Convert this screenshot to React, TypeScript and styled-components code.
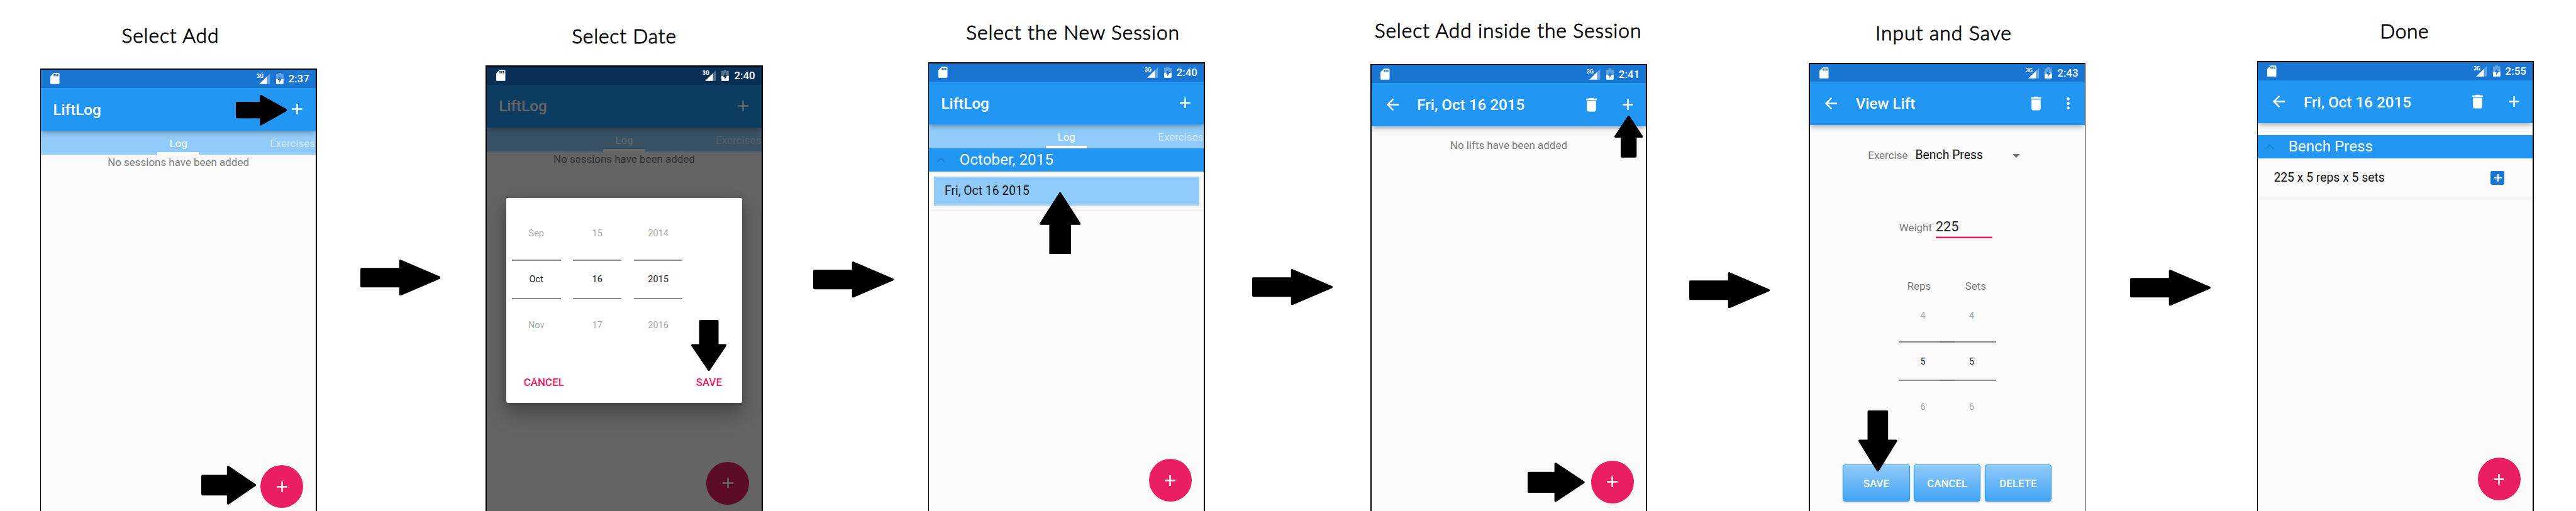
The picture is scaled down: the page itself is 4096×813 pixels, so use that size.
import React from "react";
import styled, { createGlobalStyle, css } from "styled-components";

const GlobalStyle = createGlobalStyle`
  html, body { margin: 0; padding: 0; background: #fff; overflow: hidden; }
  *, *::before, *::after { box-sizing: border-box; }
`;

const color = {
  primary: "#2196f3",
  primaryDark: "#1976d2",
  primaryLight: "#90caf9",
  accent: "#e91e63",
  surface: "#fafafa",
  secondaryText: "#7c7c7c",
};

/* ---------- board ---------- */

const Board = styled.main`
  zoom: 0.9074;
  width: 4514px;
  height: 896px;
  display: flex;
  align-items: stretch;
  overflow: hidden;
  background: #fff;
  font-family: Roboto, "Liberation Sans", sans-serif;
`;

const StepColumn = styled.section<{ $gap: number }>`
  flex: none;
  width: 485px;
  margin-left: ${(p) => p.$gap}px;
  display: flex;
  flex-direction: column;
`;

const StepHeading = styled.h2<{ $height: number; $top: number; $shift: number; $track: number }>`
  flex: none;
  margin: 0 -40px;
  height: ${(p) => p.$height}px;
  padding-top: ${(p) => p.$top}px;
  padding-left: ${(p) => Math.max(0, p.$shift * 2)}px;
  padding-right: ${(p) => Math.max(0, -p.$shift * 2)}px;
  font: 300 35px/42px Lato, "Liberation Sans", sans-serif;
  -webkit-text-stroke: 1px #000;
  letter-spacing: ${(p) => p.$track}px;
  text-align: center;
  white-space: nowrap;
  color: #000;
`;

const Frame = styled.div`
  flex: 1;
  min-height: 0;
  padding: 2px 2px 0;
  background: #000;
`;

const Screen = styled.div`
  position: relative;
  height: 100%;
  overflow: hidden;
  background: ${color.surface};
`;

const Connector = styled.div<{ $gap: number; $top: number }>`
  flex: none;
  width: 141px;
  margin-left: ${(p) => p.$gap}px;
  padding-top: ${(p) => p.$top}px;
  line-height: 0;
`;

/* ---------- block arrows ---------- */

type Direction = "right" | "up" | "down";

const ArrowSvg = styled.svg`
  display: block;
`;

const Pointer = styled.div<{ $x: number; $y: number }>`
  position: absolute;
  left: ${(p) => p.$x}px;
  top: ${(p) => p.$y}px;
  z-index: 5;
`;

function Arrow({ dir, length, span, head, shaft }: {
  dir: Direction; length: number; span: number; head: number; shaft: number;
}) {
  const r = 2;
  const neck = length - head + r;
  const a = (span - shaft) / 2 + r;
  const b = (span + shaft) / 2 - r;
  const base: [number, number][] = [
    [r, a], [neck, a], [neck, r], [length - r, span / 2], [neck, span - r], [neck, b], [r, b],
  ];
  const points = base.map(([x, y]) =>
    dir === "right" ? [x, y] : dir === "down" ? [y, x] : [y, length - x]
  );
  const w = dir === "right" ? length : span;
  const h = dir === "right" ? span : length;
  return (
    <ArrowSvg width={w} height={h} viewBox={`0 0 ${w} ${h}`}>
      <polygon points={points.map((p) => p.join(",")).join(" ")} fill="#000" stroke="#000" strokeWidth={r * 2} strokeLinejoin="round" />
    </ArrowSvg>
  );
}

const StepArrow = ({ gap, top }: { gap: number; top: number }) => (
  <Connector $gap={gap} $top={top}>
    <Arrow dir="right" length={141} span={63.3} head={73} shaft={34} />
  </Connector>
);

/* ---------- status bar ---------- */

const StatusBarRow = styled.div<{ $dim?: boolean }>`
  position: relative;
  z-index: 3;
  height: 32px;
  padding: 0 11px 0 16px;
  display: flex;
  align-items: center;
  background: ${(p) => (p.$dim ? "#0a2f54" : color.primaryDark)};
`;

const StatusIcons = styled.div`
  margin-left: auto;
  display: flex;
  align-items: center;
`;

const Clock = styled.span`
  margin-left: 9px;
  padding-top: 1.5px;
  font-size: 18.67px;
  line-height: 30px;
  font-weight: 500;
  color: #fff;
`;

const Icon = styled.svg<{ $ml?: number }>`
  flex: none;
  display: block;
  overflow: visible;
  margin-left: ${(p) => p.$ml ?? 0}px;
`;

function StatusBar({ time, dim }: { time: string; dim?: boolean }) {
  return (
    <StatusBarRow $dim={dim}>
      <Icon width="16" height="20" viewBox="0 0 16 20">
        <path fill="#fff" fillRule="evenodd" d="M6 .3H14.400a1.600 1.600 0 0 1 1.600 1.600V18.100a1.600 1.600 0 0 1-1.600 1.600H1.600A1.600 1.600 0 0 1 0 18.100V6.300ZM5.800 2.300V6H7.600V2.300ZM9 2.300V6H10.800V2.300ZM12.200 2.300V6H14V2.300Z" />
      </Icon>
      <StatusIcons>
        <Icon width="24" height="20" viewBox="0 0 24 20">
          <path d="M23.500 1V19.500H18.300V6.200Z" fill="#fff" opacity=".32" />
          <path d="M4.500 19.500 18.300 6.200V19.500Z" fill="#fff" />
          <text x="0" y="9.200" fontSize="11" fontWeight="700" fill="#fff" textLength="12" lengthAdjust="spacingAndGlyphs">3G</text>
        </Icon>
        <Icon $ml={10} width="13" height="20" viewBox="0 0 13 20">
          <path d="M4 0H9V2H13V10.700H0V2H4Z" fill="#fff" opacity=".32" />
          <path d="M0 10.700H13V18.500a1 1 0 0 1-1 1H1a1 1 0 0 1-1-1Z" fill="#fff" />
          <path d="M7.400 5 3 12.200H5.700V17.200L10.200 10H7.400Z" fill={dim ? "#0a2f54" : color.primaryDark} />
        </Icon>
        <Clock>{time}</Clock>
      </StatusIcons>
    </StatusBarRow>
  );
}

/* ---------- app bar ---------- */

const AppBarRow = styled.header`
  position: relative;
  z-index: 1;
  height: 75px;
  padding: 0 16px 0 21px;
  display: flex;
  align-items: center;
  background: ${color.primary};
  box-shadow: 0 4px 9px -1px rgba(0, 0, 0, 0.36);
`;

const BackButton = styled.span`
  width: 32px;
  margin-right: 27px;
`;

const AppTitle = styled.h1`
  margin: 0;
  padding-top: 2px;
  flex: 1;
  font-size: 26.67px;
  line-height: 40px;
  font-weight: 500;
  color: #fff;
  white-space: nowrap;
`;

const Actions = styled.div<{ $gap?: number; $shift?: number }>`
  display: flex;
  gap: ${(p) => p.$gap ?? 32}px;
  margin-right: ${(p) => p.$shift ?? 0}px;
`;

const glyphs = {
  add: "M19 13h-6v6h-2v-6H5v-2h6V5h2v6h6v2z",
  back: "M20 11H7.83l5.590-5.590L12 4l-8 8 8 8 1.410-1.410L7.830 13H20v-2z",
  trash: "M6 19c0 1.100.9 2 2 2h8c1.100 0 2-.9 2-2V7H6v12zM19 4h-3.500l-1-1h-5l-1 1H5v2h14V4z",
  more: "M12 8c1.100 0 2-.9 2-2s-.9-2-2-2-2 .9-2 2 .9 2 2 2zm0 2c-1.100 0-2 .9-2 2s.9 2 2 2 2-.9 2-2-.9-2-2-2zm0 6c-1.100 0-2 .9-2 2s.9 2 2 2 2-.9 2-2-.9-2-2-2z",
};

const Glyph = ({ name }: { name: keyof typeof glyphs }) => (
  <Icon width="32" height="32" viewBox="0 0 24 24" fill="#fff">
    <path d={glyphs[name]} />
  </Icon>
);

function AppBar({ title, back, actions, actionGap, actionShift }: {
  title: string; back?: boolean; actions: (keyof typeof glyphs)[]; actionGap?: number; actionShift?: number;
}) {
  return (
    <AppBarRow>
      {back && <BackButton><Glyph name="back" /></BackButton>}
      <AppTitle>{title}</AppTitle>
      <Actions $gap={actionGap} $shift={actionShift}>
        {actions.map((a) => <Glyph key={a} name={a} />)}
      </Actions>
    </AppBarRow>
  );
}

/* ---------- tabs, messages, lists ---------- */

const TabStrip = styled.nav`
  height: 42.600px;
  padding-left: 204px;
  display: flex;
  overflow: hidden;
  background: ${color.primaryLight};
`;

const Tab = styled.span<{ $active?: boolean }>`
  flex: none;
  width: ${(p) => (p.$active ? "73px" : "auto")};
  margin-left: ${(p) => (p.$active ? 0 : 124)}px;
  padding-top: 8px;
  font-size: 18.670px;
  line-height: 30px;
  text-align: center;
  color: ${(p) => (p.$active ? "#fff" : "rgba(255,255,255,.6)")};
  ${(p) => p.$active && css`box-shadow: inset 0 -4.400px 0 #fff;`}
`;

const Tabs = () => (
  <TabStrip>
    <Tab $active>Log</Tab>
    <Tab>Exercises</Tab>
  </TabStrip>
);

const EmptyMessage = styled.p<{ $top: number }>`
  margin: 0;
  padding-top: ${(p) => p.$top}px;
  font-size: 18.670px;
  line-height: 25px;
  text-align: center;
  color: ${color.secondaryText};
`;

const GroupHeader = styled.div<{ $top?: number }>`
  margin-top: ${(p) => p.$top ?? 0}px;
  height: 40px;
  padding-left: 13px;
  display: flex;
  align-items: center;
  gap: 24.300px;
  background: ${color.primary};
  font-size: 26.670px;
  line-height: 40px;
  color: #fff;
`;

const Chevron = () => (
  <Icon width="16" height="10" viewBox="0 0 16 10">
    <path d="M1 9 8 2l7 7" fill="none" stroke="#000" strokeOpacity=".14" strokeWidth="2.200" />
  </Icon>
);

const SessionRow = styled.div`
  padding: 9.300px 8px 8.700px;
  border-bottom: 1.330px solid #dcdcdc;
`;

const SessionCard = styled.div`
  height: 50.300px;
  padding-left: 19px;
  background: ${color.primaryLight};
  font-size: 21.330px;
  line-height: 50.300px;
  color: #111;
`;

const LiftRow = styled.div`
  height: 69.300px;
  padding: 1px 49px 0 27.500px;
  display: flex;
  align-items: center;
  justify-content: space-between;
  border-bottom: 1.330px solid #dcdcdc;
  font-size: 21.330px;
  color: #111;
`;

const AddSetButton = styled.span`
  width: 24.300px;
  height: 24.300px;
  display: grid;
  place-items: center;
  border-radius: 2.700px;
  background: ${color.primaryDark};
`;

const Fab = styled.div`
  position: absolute;
  right: 21.300px;
  top: 693.700px;
  width: 75px;
  height: 75px;
  display: grid;
  place-items: center;
  border-radius: 50%;
  background: ${color.accent};
`;

const AddFab = () => <Fab><Glyph name="add" /></Fab>;

/* ---------- date dialog ---------- */

const Scrim = styled.div`
  position: absolute;
  inset: 0;
  z-index: 2;
  padding-top: 231.400px;
  background: rgba(0, 0, 0, 0.6);
`;

const Dialog = styled.div`
  width: 414px;
  height: 358.300px;
  margin: 0 auto;
  padding-top: 18.600px;
  display: flex;
  flex-direction: column;
  border-radius: 2.700px;
  background: #fff;
  box-shadow: 0 20px 32px 2px rgba(0, 0, 0, 0.26), 0 0 14px rgba(0, 0, 0, 0.16);
`;

const DialogActions = styled.div`
  flex: 1;
  padding: 17px 35.500px 0 31px;
  display: flex;
  align-items: center;
  justify-content: space-between;
  font-size: 18.670px;
  font-weight: 500;
  color: ${color.accent};
`;

const Pickers = styled.div<{ $left: number; $gap: number }>`
  display: flex;
  gap: ${(p) => p.$gap}px;
  padding-left: ${(p) => p.$left}px;
`;

const PickerColumn = styled.div`
  width: 85.500px;
  text-align: center;
  font-size: 16px;
`;

const PickerValue = styled.div<{ $height: number }>`
  height: ${(p) => p.$height}px;
  line-height: ${(p) => p.$height}px;
  color: #a9a9a9;
`;

const PickerCurrent = styled.div<{ $join?: "left" | "right" }>`
  height: 69.900px;
  padding-top: 2px;
  line-height: 64px;
  color: #212121;
  border: solid #888;
  border-width: 2.700px 0;
  ${(p) => p.$join && css`
    border-image: linear-gradient(to ${p.$join}, #888 0 84%, #717171 84% 100%) 1;
  `}
`;

function Picker({ values, join }: { values: [string, string, string]; join?: "left" | "right" }) {
  return (
    <PickerColumn>
      <PickerValue $height={88.4}>{values[0]}</PickerValue>
      <PickerCurrent $join={join}>{values[1]}</PickerCurrent>
      <PickerValue $height={91.8}>{values[2]}</PickerValue>
    </PickerColumn>
  );
}

/* ---------- lift form ---------- */

const FieldRow = styled.div<{ $top: number; $left: number }>`
  margin-top: ${(p) => p.$top}px;
  padding-left: ${(p) => p.$left}px;
  height: 41px;
  display: flex;
  align-items: baseline;
  line-height: 40px;
`;

const FieldLabel = styled.label<{ $width: number }>`
  width: ${(p) => p.$width}px;
  font-size: 18.670px;
  color: ${color.secondaryText};
`;

const SelectValue = styled.span`
  width: 170.500px;
  font-size: 21.330px;
  color: #111;
`;

const Caret = styled(Icon)`
  align-self: center;
`;

const NumberInput = styled.span`
  width: 99px;
  font-size: 24px;
  color: #212121;
  box-shadow: inset 0 -2.700px 0 ${color.accent};
`;

const PickerLabels = styled.div`
  margin-top: 75.500px;
  padding-left: 141.500px;
  display: flex;
  font-size: 18.670px;
  line-height: 16px;
  text-align: center;
  color: ${color.secondaryText};
`;

const PickerLabel = styled.span`
  width: 99px;
`;

const ButtonRow = styled.div`
  margin-top: 54.500px;
  padding-left: 57.400px;
  display: flex;
  gap: 7px;
`;

const FormButton = styled.button`
  width: 117.300px;
  height: 64.700px;
  padding: 2px 0 0;
  border: 1.400px solid ${color.primary};
  border-radius: 4px;
  background: linear-gradient(#90caf9, #42a5f5);
  box-shadow: 0 1px 3px rgba(0, 0, 0, 0.18);
  font: 500 18.670px Roboto, sans-serif;
  color: #fff;
`;

/* ---------- steps ---------- */

function Step({ title, gap, top, baseline, shift, track, children }: {
  title: string; gap: number; top: number; baseline: number; shift: number; track: number; children: React.ReactNode;
}) {
  return (
    <StepColumn $gap={gap}>
      <StepHeading $height={top} $top={baseline - 34.5} $shift={shift} $track={track}>{title}</StepHeading>
      <Frame>
        <Screen>{children}</Screen>
      </Frame>
    </StepColumn>
  );
}

export default function App() {
  return (
    <>
      <GlobalStyle />
      <Board>
        <Step title="Select Add" gap={70} top={120} baseline={75} shift={-14} track={1}>
          <StatusBar time="2:37" />
          <AppBar title="LiftLog" actions={["add"]} />
          <Tabs />
          <EmptyMessage $top={1}>No sessions have been added</EmptyMessage>
          <AddFab />
          <Pointer $x={341} $y={44.7}><Arrow dir="right" length={90} span={53.3} head={48} shaft={29} /></Pointer>
          <Pointer $x={281} $y={695}><Arrow dir="right" length={96} span={68} head={51} shaft={36} /></Pointer>
        </Step>
        <StepArrow gap={76} top={454.7} />

        <Step title="Select Date" gap={79.3} top={114.3} baseline={76} shift={0} track={0.9}>
          <StatusBar time="2:40" dim />
          <AppBar title="LiftLog" actions={["add"]} />
          <Tabs />
          <EmptyMessage $top={1}>No sessions have been added</EmptyMessage>
          <AddFab />
          <Scrim>
            <Dialog>
              <Pickers $left={10.3} $gap={21.3}>
                <Picker values={["Sep", "Oct", "Nov"]} />
                <Picker values={["15", "16", "17"]} />
                <Picker values={["2014", "2015", "2016"]} />
              </Pickers>
              <DialogActions>
                <span>CANCEL</span>
                <span>SAVE</span>
              </DialogActions>
            </Dialog>
          </Scrim>
          <Pointer $x={357.7} $y={444.4}><Arrow dir="down" length={89.3} span={62} head={47} shaft={34} /></Pointer>
        </Step>
        <StepArrow gap={88.7} top={459} />

        <Step title="Select the New Session" gap={60.3} top={109} baseline={69.7} shift={11.5} track={1}>
          <StatusBar time="2:40" />
          <AppBar title="LiftLog" actions={["add"]} />
          <Tabs />
          <GroupHeader><Chevron />October, 2015</GroupHeader>
          <SessionRow><SessionCard>Fri, Oct 16 2015</SessionCard></SessionRow>
          <AddFab />
          <Pointer $x={193.5} $y={225.7}><Arrow dir="up" length={109} span={72} head={57} shaft={38} /></Pointer>
        </Step>
        <StepArrow gap={82.7} top={471.7} />

        <Step title="Select Add inside the Session" gap={66.3} top={112} baseline={66.7} shift={-1} track={1}>
          <StatusBar time="2:41" />
          <AppBar title="Fri, Oct 16 2015" back actions={["trash", "add"]} />
          <EmptyMessage $top={21.8}>No lifts have been added</EmptyMessage>
          <AddFab />
          <Pointer $x={425.7} $y={89}><Arrow dir="up" length={73.7} span={50} head={38.7} shaft={28} /></Pointer>
          <Pointer $x={273.7} $y={697}><Arrow dir="right" length={100} span={69} head={53} shaft={36.7} /></Pointer>
        </Step>
        <StepArrow gap={73.7} top={476.7} />

        <Step title="Input and Save" gap={69} top={110} baseline={71} shift={-6.5} track={1.1}>
          <StatusBar time="2:43" />
          <AppBar title="View Lift" back actions={["trash", "more"]} actionGap={24.3} actionShift={-3} />
          <FieldRow $top={33.7} $left={101.5}>
            <FieldLabel $width={83}>Exercise</FieldLabel>
            <SelectValue>Bench Press</SelectValue>
            <Caret width="13" height="7" viewBox="0 0 13 7"><path d="M0 0H13L6.500 7Z" fill="#757575" /></Caret>
          </FieldRow>
          <FieldRow $top={83.9} $left={156}>
            <FieldLabel $width={64}>Weight</FieldLabel>
            <NumberInput>225</NumberInput>
          </FieldRow>
          <PickerLabels>
            <PickerLabel>Reps</PickerLabel>
            <PickerLabel>Sets</PickerLabel>
          </PickerLabels>
          <Pickers $left={155} $gap={0}>
            <Picker values={["4", "5", "6"]} join="right" />
            <Picker values={["4", "5", "6"]} join="left" />
          </Pickers>
          <ButtonRow>
            <FormButton>SAVE</FormButton>
            <FormButton>CANCEL</FormButton>
            <FormButton>DELETE</FormButton>
          </ButtonRow>
          <Pointer $x={85} $y={607.7}><Arrow dir="down" length={107.3} span={68} head={56} shaft={36} /></Pointer>
        </Step>
        <StepArrow gap={78} top={473} />

        <Step title="Done" gap={81} top={107} baseline={67.7} shift={16} track={0.6}>
          <StatusBar time="2:55" />
          <AppBar title="Fri, Oct 16 2015" back actions={["trash", "add"]} />
          <GroupHeader $top={21.3}><Chevron />Bench Press</GroupHeader>
          <LiftRow>
            225 x 5 reps x 5 sets
            <AddSetButton>
              <Icon width="13" height="13" viewBox="0 0 13 13">
                <path d="M6.500 0V13M0 6.500H13" stroke="#fff" strokeWidth="2.600" />
              </Icon>
            </AddSetButton>
          </LiftRow>
          <AddFab />
        </Step>
      </Board>
    </>
  );
}
